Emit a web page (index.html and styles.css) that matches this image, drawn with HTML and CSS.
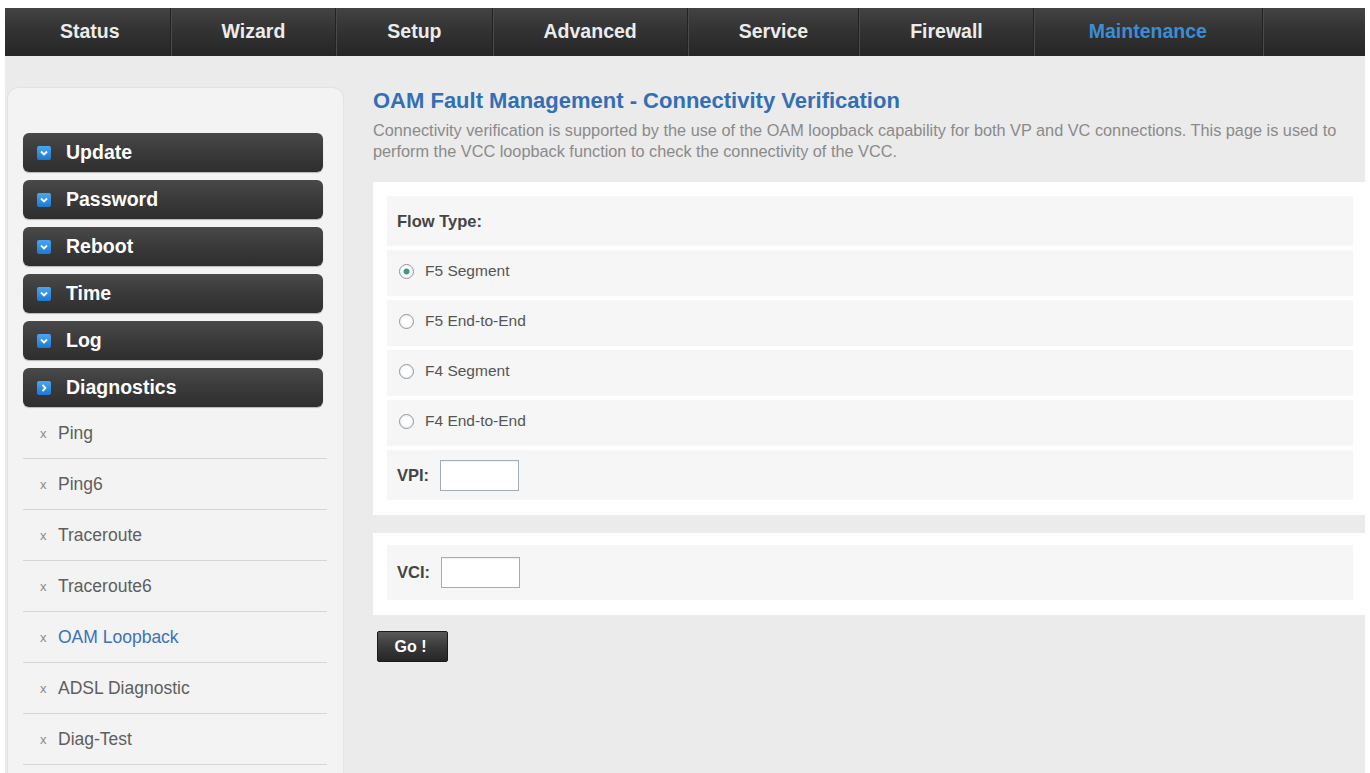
FILE: index.html
```html
<!DOCTYPE html>
<html lang="en">
  <head>
    <meta charset="UTF-8" />
    <meta name="viewport" content="width=device-width, initial-scale=1.0" />
    <title>OAM Loopback</title>
    <link rel="stylesheet" href="styles.css">
  </head>
  <body>
    <div class="page">
      <ul class="topnav">
        <li><a href="#">Status</a></li>
        <li><a href="#">Wizard</a></li>
        <li><a href="#">Setup</a></li>
        <li><a href="#">Advanced</a></li>
        <li><a href="#">Service</a></li>
        <li><a href="#">Firewall</a></li>
        <li class="active"><a href="#">Maintenance</a></li>
      </ul>

      <div class="layout">
        <aside class="sidebar">
          <div class="menu-head">
            <span class="menu-icon"><svg viewBox="0 0 14 14"><path d="M4 5.5 L7 8.5 L10 5.5" /></svg></span>
            Update
          </div>
          <div class="menu-head">
            <span class="menu-icon"><svg viewBox="0 0 14 14"><path d="M4 5.5 L7 8.5 L10 5.5" /></svg></span>
            Password
          </div>
          <div class="menu-head">
            <span class="menu-icon"><svg viewBox="0 0 14 14"><path d="M4 5.5 L7 8.5 L10 5.5" /></svg></span>
            Reboot
          </div>
          <div class="menu-head">
            <span class="menu-icon"><svg viewBox="0 0 14 14"><path d="M4 5.5 L7 8.5 L10 5.5" /></svg></span>
            Time
          </div>
          <div class="menu-head">
            <span class="menu-icon"><svg viewBox="0 0 14 14"><path d="M4 5.5 L7 8.5 L10 5.5" /></svg></span>
            Log
          </div>
          <div class="menu-head">
            <span class="menu-icon"><svg viewBox="0 0 14 14"><path d="M5.5 4 L8.5 7 L5.5 10" /></svg></span>
            Diagnostics
          </div>
          <ul class="submenu">
            <li><span class="bullet">x</span>Ping</li>
            <li><span class="bullet">x</span>Ping6</li>
            <li><span class="bullet">x</span>Traceroute</li>
            <li><span class="bullet">x</span>Traceroute6</li>
            <li class="current"><span class="bullet">x</span>OAM Loopback</li>
            <li><span class="bullet">x</span>ADSL Diagnostic</li>
            <li><span class="bullet">x</span>Diag-Test</li>
          </ul>
        </aside>

        <main class="content">
          <h1>OAM Fault Management - Connectivity Verification</h1>
          <p class="intro">
            Connectivity verification is supported by the use of the OAM loopback capability for both VP and VC connections. This page is used to
            perform the VCC loopback function to check the connectivity of the VCC.
          </p>

          <form>
            <div class="panel">
              <div class="row row-title">Flow Type:</div>
              <label class="row row-radio"><input type="radio" name="flow" checked /> F5 Segment</label>
              <label class="row row-radio"><input type="radio" name="flow" /> F5 End-to-End</label>
              <label class="row row-radio"><input type="radio" name="flow" /> F4 Segment</label>
              <label class="row row-radio"><input type="radio" name="flow" /> F4 End-to-End</label>
              <div class="row row-field">
                <label for="vpi">VPI:</label>
                <input id="vpi" type="text" />
              </div>
            </div>
            <div class="panel panel-small">
              <div class="row row-field row-tall">
                <label for="vci">VCI:</label>
                <input id="vci" type="text" />
              </div>
            </div>
            <button type="submit" class="go">Go !</button>
          </form>
        </main>
      </div>
    </div>
  </body>
</html>
```

FILE: styles.css
```css
html,
body {
  height: 100%;
}
body {
  margin: 0;
  background-color: #fff;
  font-family: "Liberation Sans", Arial, sans-serif;
  color: #555;
  overflow: hidden;
}
.page {
  margin: 8px 5px 0;
  min-height: calc(100% - 8px);
  background-color: #ebebeb;
  display: flex;
  flex-direction: column;
}

/* top navigation */
.topnav {
  list-style: none;
  margin: 0;
  padding: 0 0 0 6px;
  height: 48px;
  display: flex;
  background: linear-gradient(#434343, #333 45%, #262626);
}
.topnav li {
  display: flex;
  align-items: center;
  padding: 0 50px;
  border-right: 1px solid #232323;
  box-shadow: 1px 0 0 #4a4a4a;
  margin-right: 1px;
}
.topnav li:first-child {
  padding-left: 49px;
}
.topnav li.active {
  padding: 0 55px 0 54px;
}
.topnav a {
  color: #ececec;
  text-decoration: none;
  font-weight: bold;
  font-size: 19.5px;
  padding-bottom: 2px;
}
.topnav li.active a {
  color: #3b8ed6;
}

.layout {
  flex: 1;
  display: flex;
  padding-top: 32px;
}

/* left menu */
.sidebar {
  width: 300px;
  margin-left: 3px;
  padding: 45px 20px 0 15px;
  background-color: #f3f3f3;
  border-radius: 10px 10px 0 0;
  box-shadow: 0 0 2px rgba(0, 0, 0, 0.12);
}
.menu-head {
  height: 39px;
  margin-bottom: 8px;
  display: flex;
  align-items: center;
  padding-left: 14px;
  border-radius: 6px;
  background: linear-gradient(#494949, #3a3a3a 50%, #2e2e2e);
  box-shadow: 0 1px 1px rgba(0, 0, 0, 0.25);
  color: #fff;
  font-weight: bold;
  font-size: 19.5px;
}
.menu-head:nth-of-type(6) {
  margin-bottom: 1px;
}
.menu-icon {
  width: 14px;
  height: 14px;
  margin-right: 15px;
  border-radius: 2px;
  background: linear-gradient(#4aa6f2, #1f78d2);
  display: inline-flex;
}
.menu-icon svg {
  width: 14px;
  height: 14px;
  fill: none;
  stroke: #fff;
  stroke-width: 1.8;
}
.submenu {
  list-style: none;
  margin: 0;
  padding: 0;
}
.submenu li {
  height: 50px;
  display: flex;
  align-items: center;
  padding-left: 17px;
  margin-right: -4px;
  border-bottom: 1px solid #d6d6d6;
  font-size: 17.5px;
  color: #5e5e5e;
}
.submenu li.current {
  color: #3c72b7;
}
.bullet {
  width: 18px;
  font-size: 13px;
  color: #8a8a8a;
}

/* main area */
.content {
  flex: 1;
  margin-left: 30px;
}
.content h1 {
  margin: 0;
  font-size: 22px;
  line-height: 26px;
  color: #336fb5;
}
.intro {
  margin: 6px 0 0;
  padding-right: 20px;
  font-size: 16.3px;
  line-height: 21px;
  color: #8a8a8a;
}
.panel {
  margin-top: 20px;
  padding: 14px 12px 15px 14px;
  background-color: #fff;
}
.panel-small {
  margin-top: 18px;
  padding-top: 12px;
}
.row {
  display: flex;
  align-items: center;
  padding-left: 10px;
  background-color: #f6f6f6;
  margin-bottom: 4px;
}
.row:last-child {
  margin-bottom: 0;
}
.row-title {
  height: 50px;
  font-weight: bold;
  font-size: 16.5px;
  color: #444;
}
.row-radio {
  height: 46px;
  padding-bottom: 4px;
  box-sizing: border-box;
  font-size: 15.5px;
  color: #555;
}
.row-radio input {
  appearance: none;
  width: 15px;
  height: 15px;
  margin: 0 11px 0 2px;
  border: 1.5px solid #8e969c;
  border-radius: 50%;
  background: radial-gradient(circle, #fff 40%, #e6e8ea);
}
.row-radio input:checked {
  background: radial-gradient(circle, #3f9a78 0 2.5px, #fff 3.5px, #eef0f0);
}
.row-field {
  height: 50px;
  font-weight: bold;
  font-size: 16.5px;
  color: #444;
}
.row-tall {
  height: 55px;
}
.row-field input {
  width: 79px;
  height: 31px;
  box-sizing: border-box;
  margin-left: 11px;
  border: 1px solid #a3adb6;
  background-color: #fff;
  box-shadow: inset 0 1px 1px rgba(0, 0, 0, 0.06);
}
.go {
  margin: 16px 0 0 4px;
  width: 71px;
  height: 31px;
  padding: 0 4px 0 0;
  border: 1px solid #1b1b1b;
  border-radius: 2px;
  background: linear-gradient(#585858, #3a3a3a 50%, #262626);
  color: #fff;
  font-family: "Liberation Sans", Arial, sans-serif;
  font-weight: bold;
  font-size: 16px;
  cursor: pointer;
}
```
